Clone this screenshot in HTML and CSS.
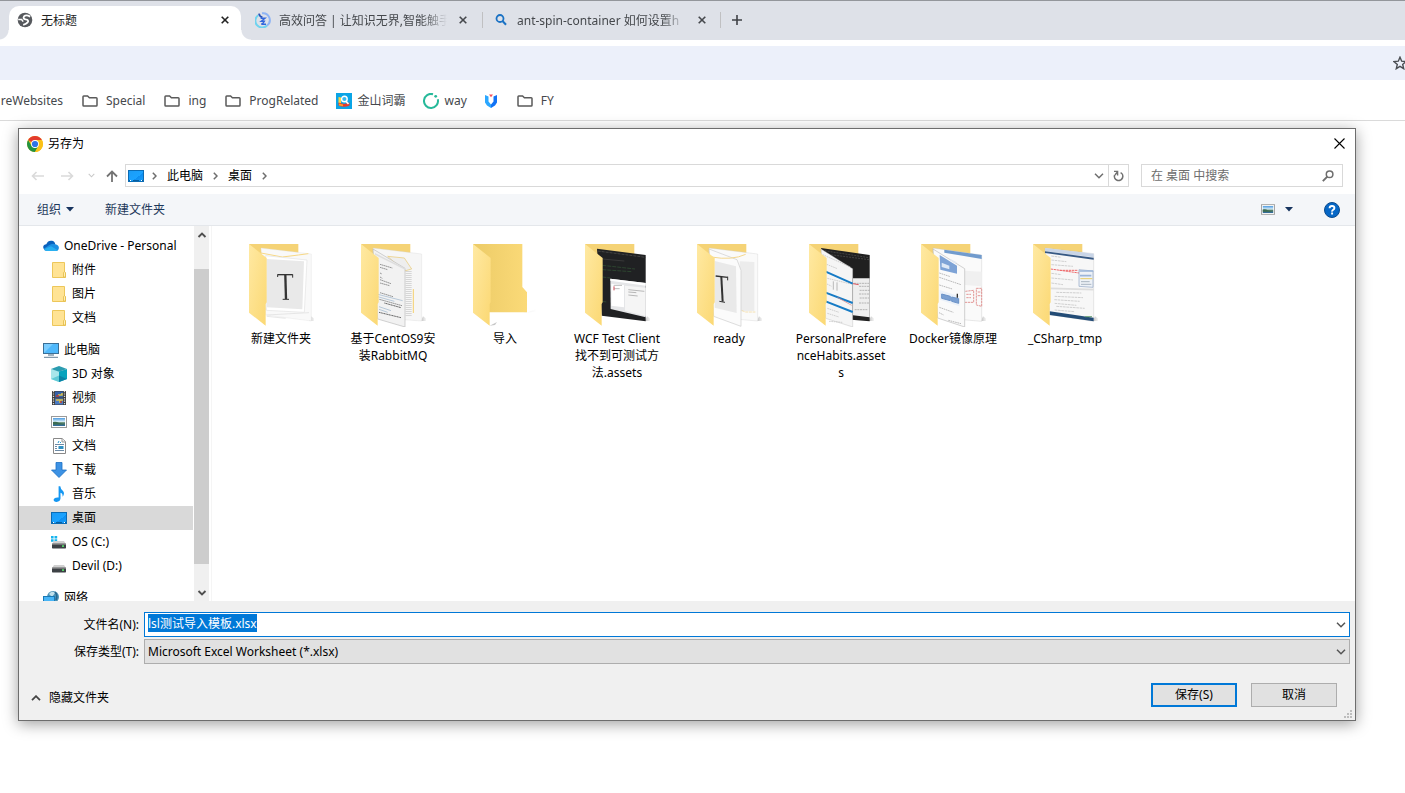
FILE: index.html
```html
<!DOCTYPE html>
<html lang="zh-CN">
<head>
<meta charset="utf-8">
<title>无标题</title>
<link rel="stylesheet" href="styles.css">
</head>
<body>
<svg class="defs" aria-hidden="true">
  <defs>
    <linearGradient id="gFront" x1="0" y1="0" x2="1" y2="1"><stop offset="0" stop-color="#ffe9a2"/><stop offset="1" stop-color="#fbd873"/></linearGradient>
    <linearGradient id="gBack" x1="0" y1="0" x2="1" y2="0"><stop offset="0" stop-color="#eccb67"/><stop offset="1" stop-color="#fbda78"/></linearGradient>
    <linearGradient id="gBlue" x1="0" y1="0" x2="1" y2="1"><stop offset="0" stop-color="#1b9bf5"/><stop offset=".6" stop-color="#1ba3ff"/><stop offset=".6" stop-color="#0d8df0"/><stop offset="1" stop-color="#1aa0fa"/></linearGradient>
    <linearGradient id="gSky" x1="0" y1="0" x2="0" y2="1"><stop offset="0" stop-color="#4d9be0"/><stop offset=".45" stop-color="#d7ecf8"/><stop offset=".6" stop-color="#557f5e"/><stop offset="1" stop-color="#2d6aa6"/></linearGradient>
    <linearGradient id="gShade" x1="0" y1="0" x2="1" y2="0"><stop offset="0" stop-color="#999" stop-opacity=".6"/><stop offset="1" stop-color="#999" stop-opacity="0"/></linearGradient>
    <symbol id="folderOutline" viewBox="0 0 16 12"><path d="M1 1.8Q1 1 1.8 1H5.6L7.4 2.7H14.2Q15 2.7 15 3.5V10.2Q15 11 14.2 11H1.8Q1 11 1 10.2Z" fill="none" stroke="#5a5a5a" stroke-width="1.5"/></symbol>
    <symbol id="closeX" viewBox="0 0 8 8"><path d="M.7.7 7.3 7.3M7.3.7.7 7.3" stroke="currentColor" stroke-width="1.6"/></symbol>
    <symbol id="chevDown" viewBox="0 0 10 6"><path d="M1 .8 5 4.8 9 .8" fill="none" stroke="currentColor" stroke-width="1.5"/></symbol>
    <symbol id="chevRight" viewBox="0 0 5 8"><path d="M.8.8 4 4 .8 7.2" fill="none" stroke="#6e6e6e" stroke-width="1.5"/></symbol>
    <symbol id="smallFolder" viewBox="0 0 14 16"><path d="M.5.5H12.5V10L13.5 11V15.5H.5Z" fill="#ffe394" stroke="#edc75a"/><path d="M11.5 15V10.5L12.5 9.5L13.5 11V15Z" fill="#fff0b8" stroke="#e3ba45" stroke-width=".8"/></symbol>
    <symbol id="desktop" viewBox="0 0 16 12"><rect x=".5" y=".5" width="15" height="11" fill="url(#gBlue)" stroke="#0b6cb5"/><path d="M1 10.5H3M5 10.5H11M13 10.5H15" stroke="#075e9f"/><path d="M2 10.5H3M13 10.5H14" stroke="#fff"/></symbol>
    <symbol id="picture" viewBox="0 0 16 12"><rect x=".5" y=".5" width="15" height="11" fill="#fff" stroke="#9a9a9a"/><rect x="2" y="2" width="12" height="8" fill="url(#gSky)"/><path d="M2 6Q5 5 8 7L14 8.5H2Z" fill="#3b6b52"/></symbol>
    <symbol id="drive" viewBox="0 0 14 9"><path d="M2 1H12L14 4H0Z" fill="#d0d0d0"/><rect y="3.5" width="14" height="5" rx=".7" fill="#3d4145"/><path d="M0 4H14" stroke="#a8a8a8"/><rect x="10" y="5.3" width="2" height="1.6" fill="#57e36b"/></symbol>
    <symbol id="fBack" viewBox="-3 0 198 252"><path d="M160 210 188 198Q194 207 180 207L150 209ZM50 248 72 237 66 246Z" fill="url(#gShade)"/><path d="M0 3H148V132L162 148V208H45Z" fill="url(#gBack)"/></symbol>
    <symbol id="fBackOpen" viewBox="-3 0 198 252"><path d="M180 234 186 220Q205 232 194 234Z" fill="url(#gShade)"/><path d="M0 3H148V200H45Z" fill="#f5d376"/></symbol>
    <symbol id="fFront" viewBox="-3 0 198 252"><path d="M0 3 53 45V178L50 183V248L0 209Z" fill="url(#gFront)"/></symbol>
  </defs>
</svg>

<header class="browser">
  <div class="tabstrip">
    <div class="tab active">
      <svg class="fav" viewBox="0 0 16 16"><circle cx="8" cy="8" r="7.3" fill="#56595d"/><path d="M13.2 4.6Q9 2.4 7 4.4 5.6 6.6 8.6 7.4 12.4 8.2 10.6 10.4 9.4 12 6.2 12.8" fill="none" stroke="#fff" stroke-width="1.8"/><path d="M1.2 7.6H4.6L6.2 9.6" fill="none" stroke="#fff" stroke-width="1.5"/></svg>
      <span class="tab-title">无标题</span>
      <button class="tab-close" aria-label="关闭"><svg width="8" height="8"><use href="#closeX"/></svg></button>
    </div>
    <div class="tab">
      <svg class="fav" viewBox="0 0 16 16"><path d="M3.2 3.2A6.8 6.8 0 1 0 12 13.5" fill="none" stroke="#6fd3ef" stroke-width="2"/><path d="M7 1.3A6.8 6.8 0 0 1 12 13.5" fill="none" stroke="#8fb4f4" stroke-width="2"/><path d="M4 1.6Q4.4 4.4 7.4 5.4" fill="none" stroke="#2751b8" stroke-width="1.8"/><path d="M5.6 6.2H10L6.2 9.2H9.4Q8.6 11 6.4 12.2H11" fill="none" stroke="#3267dc" stroke-width="1.4"/></svg>
      <span class="tab-title fade">高效问答 | 让知识无界,智能触手</span>
      <button class="tab-close" aria-label="关闭"><svg width="8" height="8"><use href="#closeX"/></svg></button>
    </div>
    <div class="tab ruled">
      <svg class="fav" viewBox="0 0 16 16"><circle cx="7" cy="6.5" r="3.5" fill="none" stroke="#1b72c4" stroke-width="1.8"/><path d="M9.5 9 13 12.7" stroke="#1b72c4" stroke-width="2"/></svg>
      <span class="tab-title fade">ant-spin-container 如何设置h</span>
      <button class="tab-close" aria-label="关闭"><svg width="8" height="8"><use href="#closeX"/></svg></button>
    </div>
    <button class="new-tab" aria-label="新标签页"><svg width="10" height="10" viewBox="0 0 10 10"><path d="M5 0V10M0 5H10" stroke="#3f4246" stroke-width="1.6"/></svg></button>
  </div>
  <div class="omnibox">
    <button class="star" aria-label="收藏"><svg width="14" height="14" viewBox="0 0 14 14"><path d="M7 1.2 8.7 5.2 13 5.6 9.7 8.4 10.7 12.7 7 10.4 3.3 12.7 4.3 8.4 1 5.6 5.3 5.2Z" fill="none" stroke="#4a4d52" stroke-width="1.4"/></svg></button>
  </div>
  <nav class="bookmarks" aria-label="书签">
    <a href="#" class="first">reWebsites</a>
    <a href="#"><svg width="16" height="12"><use href="#folderOutline"/></svg>Special</a>
    <a href="#"><svg width="16" height="12"><use href="#folderOutline"/></svg>ing</a>
    <a href="#"><svg width="16" height="12"><use href="#folderOutline"/></svg>ProgRelated</a>
    <a href="#" class="site"><svg width="16" height="16" viewBox="0 0 16 16"><rect width="16" height="16" fill="#0ba5e6"/><path d="M2.5 4 5 4.5 5 10 2.5 10Z" fill="#ffd33c"/><path d="M2.5 9.5 8 11 13.5 9.5V12.5Q8 15 2.5 12.5Z" fill="#e8392b"/><path d="M3 10.5 7 11.5V13.3L3 12.5Z" fill="#ff9d25"/><circle cx="8.4" cy="6" r="2.8" fill="#35b9f2" stroke="#fff" stroke-width="1.4"/><path d="M10 8.4 12.5 11" stroke="#fff" stroke-width="1.6"/></svg>金山词霸</a>
    <a href="#" class="site"><svg width="16" height="16" viewBox="0 0 16 16"><path d="M10 1.2A7 7 0 1 0 14.8 6.3" fill="none" stroke="#26b99a" stroke-width="2"/><circle cx="12.7" cy="3.3" r="1.4" fill="#26b99a"/></svg>way</a>
    <a href="#" class="site" aria-label="书签"><svg width="14" height="16" viewBox="0 0 14 16"><path d="M1 2 4.5 3.5V8.5L7 11.5V15L3 12.5 1 9.5Z" fill="#2ba7ff"/><path d="M13 2 9.5 3.5V8.5L7 11.5V15L11 12.5 13 9.5Z" fill="#1173f5"/><path d="M5 1.5H9L7 4.3Z" fill="#f4515d"/></svg></a>
    <a href="#"><svg width="16" height="12"><use href="#folderOutline"/></svg>FY</a>
  </nav>
</header>

<section class="dialog" role="dialog" aria-label="另存为">
  <div class="titlebar">
    <svg width="16" height="16" viewBox="0 0 16 16"><circle cx="8" cy="8" r="8" fill="#fbc116"/><path d="M8 8 1.1 4A8 8 0 0 1 14.9 4H8Z" fill="#e33b2e"/><path d="M1.1 4 4.6 10 8 12 8 16A8 8 0 0 1 1.1 4Z" fill="#229342"/><path d="M4.6 10 11.4 10 8 16Z" fill="#229342"/><path d="M8 16 11.5 10V8L14.9 4A8 8 0 0 1 8 16Z" fill="#fbc116"/><circle cx="8" cy="8" r="3.9" fill="#fff"/><circle cx="8" cy="8" r="3.1" fill="#2f74e6"/></svg>
    <span>另存为</span>
    <button class="dialog-close" aria-label="关闭"><svg width="11" height="11" viewBox="0 0 11 11"><path d="M.5.5 10.5 10.5M10.5.5.5 10.5" stroke="#000" stroke-width="1.1"/></svg></button>
  </div>

  <div class="navrow">
    <div class="nav-buttons">
      <button aria-label="后退" disabled><svg width="13" height="10" viewBox="0 0 13 10"><path d="M13 5H1.5M5.5 1 1.5 5 5.5 9" fill="none" stroke="#dadada" stroke-width="1.6"/></svg></button>
      <button aria-label="前进" disabled><svg width="13" height="10" viewBox="0 0 13 10"><path d="M0 5H11.5M7.5 1 11.5 5 7.5 9" fill="none" stroke="#dadada" stroke-width="1.6"/></svg></button>
      <button class="recent" aria-label="最近位置" disabled><svg width="7" height="5"><use href="#chevDown"/></svg></button>
      <button class="up" aria-label="向上"><svg width="12" height="12" viewBox="0 0 12 12"><path d="M6 12V1.5M1 6.5 6 1.5 11 6.5" fill="none" stroke="#737373" stroke-width="1.8"/></svg></button>
    </div>
    <div class="address">
      <svg width="16" height="12"><use href="#desktop"/></svg>
      <svg class="sep" width="5" height="8"><use href="#chevRight"/></svg>
      <button>此电脑</button>
      <svg class="sep" width="5" height="8"><use href="#chevRight"/></svg>
      <button>桌面</button>
      <svg class="sep" width="5" height="8"><use href="#chevRight"/></svg>
      <button class="drop" aria-label="展开"><svg width="10" height="6"><use href="#chevDown"/></svg></button>
      <button class="refresh" aria-label="刷新"><svg width="11" height="12" viewBox="0 0 11 12"><path d="M7.6 2.6A4.2 4.2 0 1 1 1.6 5" fill="none" stroke="#707070" stroke-width="1.6"/><path d="M1 1.4H4.6V5.4M4.6 1.6 2 5" fill="none" stroke="#707070" stroke-width="1.4"/></svg></button>
    </div>
    <label class="search">
      <input type="search" aria-label="在 桌面 中搜索" placeholder="在 桌面 中搜索">
      <svg width="12" height="12" viewBox="0 0 12 12"><circle cx="7.6" cy="4.3" r="3.3" fill="none" stroke="#6e6e6e" stroke-width="1.5"/><path d="M5.3 6.7.8 11.2" stroke="#6e6e6e" stroke-width="1.9"/></svg>
    </label>
  </div>

  <div class="toolbar">
    <button>组织 <svg width="8" height="5" viewBox="0 0 8 5"><path d="M0 0H8L4 4.6Z" fill="#17345f"/></svg></button>
    <button>新建文件夹</button>
    <button class="view" aria-label="更改视图"><svg width="14" height="11"><use href="#picture" width="14" height="11"/></svg><svg width="8" height="5" viewBox="0 0 8 5"><path d="M0 0H8L4 4.6Z" fill="#17345f"/></svg></button>
    <button class="help" aria-label="帮助"><svg width="16" height="16" viewBox="0 0 16 16"><circle cx="8" cy="8" r="7.5" fill="#0667c6" stroke="#0a4a8d"/><path d="M5.6 6.2Q5.6 4 8 4T10.4 6Q10.4 7 9.2 7.8T8.1 9.6M8.1 10.6V12.6" fill="none" stroke="#fff" stroke-width="1.9"/></svg></button>
  </div>

  <div class="content">
    <nav class="tree" aria-label="文件夹">
      <a href="#" class="root"><svg width="16" height="16" viewBox="0 0 16 16"><path d="M3.5 12Q0 11.7.2 8.8.6 6.2 3.3 6.2 5 2.2 8.8 2.8 11.6 3.2 12.3 6.3L6 12Z" fill="#0a62bd"/><path d="M6 7.3Q9 5 12.3 6.2 15.8 6.8 15.9 9.7 15.8 12.8 13 13H4Q1.2 13 .8 10.7Z" fill="#1d90e2"/><path d="M1 11.2 8 8.2 14.8 12.2Q14 13 13 13H4Q2 13 1 11.2Z" fill="#29b0f0"/></svg>OneDrive - Personal</a>
      <a href="#"><svg width="16" height="16"><use href="#smallFolder"/></svg>附件</a>
      <a href="#"><svg width="16" height="16"><use href="#smallFolder"/></svg>图片</a>
      <a href="#"><svg width="16" height="16"><use href="#smallFolder"/></svg>文档</a>
      <a href="#" class="root"><svg width="16" height="16" viewBox="0 0 16 16"><rect x=".5" y="1.5" width="15" height="10" fill="#4fb8fb" stroke="#3a6f96"/><path d="M1 11 10 2H1Z" fill="#7bcdff"/><path d="M5 13H11M1 15.3H15" stroke="#8299ab" stroke-width="1.3"/></svg>此电脑</a>
      <a href="#"><svg width="16" height="16" viewBox="0 0 16 16"><path d="M0 3 8 5.5V16L0 13Z" fill="#a9e6ea"/><path d="M16 3 8 5.5V16L16 13Z" fill="#07a3bd"/><path d="M0 3 8 0 16 3 8 5.7Z" fill="#2b9cb0"/><path d="M0 13 8 9.5V16Z" fill="#62cbd6"/><path d="M16 13 8 9.5V16Z" fill="#0b83a5"/></svg>3D 对象</a>
      <a href="#"><svg width="16" height="16" viewBox="0 0 16 16"><rect x="1" y="1" width="14" height="14" fill="#3c3c3c"/><path d="M2.5 1V15M13.5 1V15" stroke="#ddd" stroke-width="1.3" stroke-dasharray="1.2 1.2"/><rect x="4" y="1.5" width="8" height="6" fill="#3461a9"/><rect x="4" y="8.5" width="8" height="6" fill="#4a7bc4"/><path d="M7 5H11V3M5 10H9V13M9 10H12" stroke="#dcc14a" stroke-width="1.5" fill="none"/><path d="M5 6H8M9 12H11" stroke="#b93d36" stroke-width="1.5"/></svg>视频</a>
      <a href="#"><svg width="16" height="12"><use href="#picture"/></svg>图片</a>
      <a href="#"><svg width="16" height="16" viewBox="0 0 16 16"><path d="M2.5.5H11L14.5 3.5V15.5H2.5Z" fill="#fff" stroke="#888"/><path d="M11 .5V4H14.5" fill="#eee" stroke="#999"/><path d="M4 6.5H13M4 8.5H6M4 10.5H6M4 12.5H13" stroke="#6d8aa5"/><path d="M7 5 8 3M9 5 10 4" stroke="#2898cf"/><rect x="7.5" y="8" width="5" height="3" fill="#2f8fc1"/></svg>文档</a>
      <a href="#"><svg width="16" height="16" viewBox="0 0 16 16"><path d="M5 .5H11V8H15.5L8 15.5.5 8H5Z" fill="#3d92e4" stroke="#1a6fc4" stroke-width=".8"/></svg>下载</a>
      <a href="#"><svg width="16" height="16" viewBox="0 0 16 16"><path d="M7.6.3H9.3Q9.5 3 11.8 4.7 14.3 7.3 11.5 10.8 12 7.4 9.5 6.7V12.6Q9 15.8 5.6 16 2.5 15.8 2.6 13.6 3.4 11 7.6 11.5Z" fill="#1597f2"/></svg>音乐</a>
      <a href="#" class="selected" aria-current="true"><svg width="16" height="12"><use href="#desktop"/></svg>桌面</a>
      <a href="#"><svg width="16" height="16" viewBox="0 0 16 16"><path d="M0 2H2.6V4.4H0ZM3.5 2H6.2V4.4H3.5ZM0 5.3H2.6V7.8H0ZM3.5 5.3H6.2V7.8H3.5Z" fill="#16b4ee"/><use href="#drive" x="1" y="6" width="14" height="9"/></svg>OS (C:)</a>
      <a href="#"><svg width="16" height="16" viewBox="0 0 16 16"><use href="#drive" x="1" y="6" width="14" height="9"/></svg>Devil (D:)</a>
      <a href="#" class="root"><svg width="16" height="16" viewBox="0 0 16 16"><circle cx="10" cy="7" r="6" fill="#4c94b7"/><path d="M6 4Q9 0 12 3L9 7Z" fill="#c3e1ec"/><path d="M12 2Q15 5 13 10" stroke="#28668f" stroke-width="1.6" fill="none"/><rect x=".5" y="6.5" width="11" height="7" fill="#48b5f6" stroke="#1979b5"/></svg>网络</a>
    </nav>
    <div class="scrollbar" aria-hidden="true">
      <svg width="10" height="6" viewBox="0 0 10 6"><path d="M1.5 5 5 1.5 8.5 5" fill="none" stroke="#505050" stroke-width="1.9"/></svg>
      <div class="thumb"></div>
      <svg width="10" height="6" viewBox="0 0 10 6"><path d="M1.5 1 5 4.5 8.5 1" fill="none" stroke="#505050" stroke-width="1.9"/></svg>
    </div>
    <ul class="files">
      <li><svg class="big" viewBox="-3 0 198 252"><use href="#fBackOpen" x="-3" width="198" height="252"/>
        <path d="M36 15 187 33V234L50 216Z" fill="#f9f9f9" stroke="#ddd"/><path d="M53 216 180 209M53 220 110 226" stroke="#ddd" stroke-width="2"/><path d="M36 30 100 42 148 36 178 32" fill="none" stroke="#f7d885" stroke-width="3"/><path d="M50 38 174 51 166 208 52 202Z" fill="#fff" stroke="#e3e3e3" stroke-width="2"/><path d="M52 48 165 55 160 199 53 193Z" fill="#e9e9e9"/><path d="M86 95H131" stroke="#333" stroke-width="4"/><path d="M109 96 111 168" stroke="#333" stroke-width="7"/><path d="M101 169H120M86 94V102M131 94V104" stroke="#333" stroke-width="3"/><use href="#fFront" x="-3" width="198" height="252"/></svg><a href="#">新建文件夹</a></li>
      <li><svg class="big" viewBox="-3 0 198 252"><use href="#fBackOpen" x="-3" width="198" height="252"/>
        <path d="M36 15 182 33V234L100 228Z" fill="#f6f6f6" stroke="#d5d5d5"/><path d="M143 84V219" stroke="#999" stroke-width="18" stroke-dasharray="2 4" opacity=".45"/><path d="M157 138V210" stroke="#f5d16f" stroke-width="3"/><path d="M80 40 130 45 152 78 130 84Z" fill="#eee" stroke="#e9c76c" stroke-width="2"/><path d="M36 18 132 76V252L50 228Z" fill="#f2f2f2" stroke="#bbb" stroke-width="2"/><path d="M42 30 132 76V80L42 35Z" fill="#ddd"/><path d="M57 64 94 75M57 73 80 80M57 90 63 93M57 102 64 106M57 110 90 122M57 120 86 128M57 149 96 161M55 169 123 188" stroke="#666" stroke-width="2" stroke-dasharray="5 1"/><path d="M50 154 125 173M50 161 100 175M54 191 90 203M54 199 80 208" stroke="#98b2ca" stroke-width="2"/><path d="M54 208 120 224M70 180 120 194" stroke="#666" stroke-width="3" stroke-dasharray="4 1"/><use href="#fFront" x="-3" width="198" height="252"/></svg><a href="#">基于CentOS9安装RabbitMQ</a></li>
      <li><svg class="big" viewBox="-3 0 198 252"><use href="#fBack" x="-3" width="198" height="252"/><use href="#fFront" x="-3" width="198" height="252"/></svg><a href="#">导入</a></li>
      <li><svg class="big" viewBox="-3 0 198 252"><use href="#fBackOpen" x="-3" width="198" height="252"/>
        <path d="M36 17 182 36V235L50 218Z" fill="#202123"/><path d="M38 24 182 43" stroke="#444" stroke-width="3" stroke-dasharray="9 3"/><path d="M52 67 150 78M52 80 140 86M52 102 76 105M52 175 65 177" stroke="#2f4a31" stroke-width="2.5" stroke-dasharray="12 3"/><path d="M52 48 118 54" stroke="#444" stroke-width="2"/><path d="M76 107 182 120V223L77 198Z" fill="#e5e6e8"/><path d="M76 107 182 120V128L76 113Z" fill="#fff"/><path d="M79 122 117 126V193L79 188Z" fill="#fff"/><path d="M120 128 182 134V219L120 203Z" fill="#f5f5f5"/><path d="M86 127H111M88 137H104M130 140 178 145M130 147 154 149M130 156 158 159" stroke="#999" stroke-width="2"/><path d="M87 130V142" stroke="#cf4652" stroke-width="3"/><use href="#fFront" x="-3" width="198" height="252"/></svg><a href="#">WCF Test Client找不到可测试方法.assets</a></li>
      <li><svg class="big" viewBox="-3 0 198 252"><use href="#fBackOpen" x="-3" width="198" height="252"/>
        <path d="M36 15 182 33V234L90 226Z" fill="#fafafa" stroke="#ccc"/><path d="M128 55 172 57V204L128 205Z" fill="#ececec"/><path d="M110 46Q126 78 124 198L145 207H175" fill="none" stroke="#f4d78e" stroke-width="2" stroke-dasharray="9 2"/><path d="M36 18 120 50 132 82V250L50 220Z" fill="#fbfbfb" stroke="#ccc" stroke-width="2"/><path d="M53 54 117 70 119 210 53 194Z" fill="#e9e9e9"/><path d="M43 42Q105 53 146 34" fill="none" stroke="#f4d78e" stroke-width="3"/><path d="M56 99 92 103" stroke="#333" stroke-width="4"/><path d="M73 102 77 176" stroke="#333" stroke-width="6"/><path d="M67 175 84 178M92 101V112" stroke="#333" stroke-width="3"/><use href="#fFront" x="-3" width="198" height="252"/></svg><a href="#">ready</a></li>
      <li><svg class="big" viewBox="-3 0 198 252"><use href="#fBackOpen" x="-3" width="198" height="252"/>
        <path d="M36 15 182 36V235L90 227Z" fill="#202020"/><path d="M38 22 180 44M40 32 180 50" stroke="#555" stroke-width="2" stroke-dasharray="6 3"/><path d="M132 106H182V223L132 217Z" fill="#eee"/><path d="M135 121H180M150 130H180M152 142H182M150 153H180M152 165H180M150 180H180M137 200H175" stroke="#999" stroke-width="2" stroke-dasharray="6 2"/><path d="M132 122 149 125" stroke="#de5961" stroke-width="3"/><path d="M36 18 131 77V252L50 226Z" fill="#f5f5f5" stroke="#aaa"/><path d="M50 86 131 122M50 149 131 180M50 175 131 207" stroke="#167bc5" stroke-width="6"/><path d="M41 35 125 72M53 64 85 77M55 106 122 122M54 123 68 130M55 196 90 208M55 211 90 222M60 235 100 238" stroke="#bbb" stroke-width="2" stroke-dasharray="5 2"/><path d="M73 115V140M84 118V143" stroke="#999" stroke-width="2"/><path d="M85 163 128 187" stroke="#dc817d" stroke-width="2"/><use href="#fFront" x="-3" width="198" height="252"/></svg><a href="#">PersonalPreferenceHabits.assets</a></li>
      <li><svg class="big" viewBox="-3 0 198 252"><use href="#fBackOpen" x="-3" width="198" height="252"/>
        <path d="M36 15 182 36V235L90 227Z" fill="#fafafa" stroke="#bbb"/><path d="M70 20 182 36V48L70 29Z" fill="#719bcd"/><path d="M132 83 182 86V130L132 126Z" fill="#f0f0f0"/><path d="M133 145 158 142V178H132M166 136H182V190L166 186ZM136 154H150M136 164H150M170 147H182M170 158H182" fill="none" stroke="#e29796" stroke-width="3" stroke-dasharray="7 2"/><path d="M36 18 131 77V252L50 225Z" fill="#fafafa" stroke="#bbb" stroke-width="2"/><path d="M56 36 108 68V92L58 80Z" fill="#7ea3d6"/><path d="M62 59 85 68V79L62 72Z" fill="#dfe9f6"/><path d="M88 50 106 60" stroke="#e0e7f2" stroke-width="5"/><path d="M55 90 88 101M55 103 120 125M55 126 94 138M55 193 97 208M54 209 68 216M82 232 120 242" stroke="#999" stroke-width="2" stroke-dasharray="5 2"/><path d="M56 141 115 160V190L56 170Z" fill="#ebf1f9"/><path d="M62 153 88 160V173L62 166ZM92 162 113 167V181L92 175Z" fill="#7ba0d2" stroke="#6a92c8" stroke-width="3"/><path d="M109 152V164" stroke="#333" stroke-width="4"/><use href="#fFront" x="-3" width="198" height="252"/></svg><a href="#">Docker镜像原理</a></li>
      <li><svg class="big" viewBox="-3 0 198 252"><use href="#fBackOpen" x="-3" width="198" height="252"/>
        <path d="M36 15 182 32V235L50 215Z" fill="#f7f7f7" stroke="#bbb"/><path d="M36 15 182 32V43L36 25Z" fill="#c9d5e7"/><path d="M36 25 182 44V50L36 30Z" fill="#375984"/><path d="M55 39 85 43M55 51 100 56M55 65 120 70M55 91 85 95M55 105 120 111M55 120 90 125M70 148 145 150M65 160 150 164M64 170 140 175M65 181 130 187M70 190 155 196M65 201 125 206" stroke="#bbb" stroke-width="2" stroke-dasharray="8 2"/><path d="M53 78 138 90M80 82H135" stroke="#ee6a6c" stroke-width="3" stroke-dasharray="7 2"/><path d="M138 80 180 84V133L138 130Z" fill="#eef2f7" stroke="#8fa5c4" stroke-width="2"/><path d="M139 84H181M141 98H175" stroke="#9bb5d9" stroke-width="5"/><path d="M142 107H178" stroke="#e6cc67" stroke-width="3"/><path d="M144 116H170M144 124H175" stroke="#8997a7" stroke-width="2"/><path d="M53 136 182 140" stroke="#ddd" stroke-width="5"/><path d="M50 205 182 224V235L50 216Z" fill="#234c76"/><path d="M156 221H177" stroke="#69a275" stroke-width="3"/><use href="#fFront" x="-3" width="198" height="252"/></svg><a href="#">_CSharp_tmp</a></li>
    </ul>
  </div>

  <form class="footer">
    <div class="fields">
      <label for="fname">文件名(N):</label>
      <div class="combo"><input id="fname" type="text" value="lsl测试导入模板.xlsx" autocomplete="off" spellcheck="false"><svg width="10" height="6"><use href="#chevDown"/></svg></div>
      <label for="ftype">保存类型(T):</label>
      <div class="combo"><select id="ftype"><option>Microsoft Excel Worksheet (*.xlsx)</option></select><svg width="10" height="6"><use href="#chevDown"/></svg></div>
    </div>
    <div class="actions">
      <button type="button" class="toggle"><svg width="10" height="6" viewBox="0 0 10 6"><path d="M1 5.2 5 1.2 9 5.2" fill="none" stroke="#444" stroke-width="1.8"/></svg>隐藏文件夹</button>
      <button type="button" class="btn primary">保存(S)</button>
      <button type="button" class="btn">取消</button>
    </div>
    <svg class="grip" width="8" height="8" viewBox="0 0 8 8"><path d="M6 0H8V2H6ZM6 3H8V5H6ZM6 6H8V8H6ZM3 3H5V5H3ZM3 6H5V8H3ZM0 6H2V8H0Z" fill="#bdbdbd"/></svg>
  </form>
</section>
<script src="app.js"></script>
</body>
</html>
```
FILE: app.js
```js
const nameField = document.getElementById('fname');
nameField.focus();
nameField.select();
```
FILE: styles.css
```css
* { box-sizing: border-box; }
html, body { height: 100%; }
body {
  margin: 0;
  background: #fff;
  color: #000;
  font: 12px/16px "Noto Sans", "Noto Sans CJK SC", sans-serif;
  overflow: hidden;
  position: relative;
}
button, input, select { font: inherit; color: inherit; }
button { background: none; border: 0; padding: 0; margin: 0; }
a { color: inherit; text-decoration: none; }
svg { display: block; flex: none; }
.defs { position: absolute; width: 0; height: 0; }

/* browser chrome */
.browser { border-bottom: 1px solid #dadada; }
.tabstrip {
  display: flex;
  height: 40px;
  padding: 5px 0 0 9px;
  background: #dee1e8;
  border-top: 1px solid #93969b;
}
.tab {
  display: flex;
  align-items: center;
  width: 240px;
  padding: 0 15px 6px 13px;
  color: #45484c;
}
.tab.active {
  position: relative;
  width: 232px;
  padding: 0 12px 6px 8px;
  margin-right: 1px;
  background: #fff;
  border-radius: 10px 10px 0 0;
  color: #222;
}
.tab.active::before, .tab.active::after {
  content: "";
  position: absolute;
  bottom: 0;
  width: 10px;
  height: 10px;
}
.tab.active::before { right: 100%; background: radial-gradient(circle at 0 0, transparent 9px, #fff 10px); }
.tab.active::after { left: 100%; background: radial-gradient(circle at 100% 0, transparent 9px, #fff 10px); }
.tab.ruled {
  width: 239px;
  padding-left: 11px;
  background: linear-gradient(#c0c0c2, #c0c0c2) 0 6px / 1px 16px no-repeat, linear-gradient(#c0c0c2, #c0c0c2) 100% 6px / 1px 16px no-repeat;
}
.fav { width: 16px; height: 16px; margin-right: 8px; }
.tab-title { flex: 1; min-width: 0; padding-top: 1px; white-space: nowrap; overflow: hidden; }
.tab-title.fade { mask-image: linear-gradient(90deg, #000 calc(100% - 24px), transparent); }
.tab-close { width: 8px; height: 8px; margin-left: 12px; }
.new-tab { width: 32px; display: flex; justify-content: center; align-items: center; padding-bottom: 6px; }
.omnibox {
  display: flex;
  justify-content: flex-end;
  align-items: center;
  height: 34px;
  margin-top: 6px;
  background: #ecf0fa;
  overflow: hidden;
}
.star { margin-right: -2px; }
.bookmarks {
  display: flex;
  align-items: center;
  gap: 19px;
  height: 40px;
  padding-top: 1px;
  color: #45484c;
}
.bookmarks a { display: flex; align-items: center; gap: 8px; white-space: nowrap; }
.bookmarks .first { width: 63px; justify-content: flex-end; }
.bookmarks .site { gap: 6px; margin-left: -2px; }

/* save dialog */
.dialog {
  position: absolute;
  top: 128px;
  left: 18px;
  right: 49px;
  background: #fff;
  border: 1px solid #6d6d6d;
  box-shadow: 0 3px 14px rgba(0, 0, 0, .38);
}
.titlebar { display: flex; align-items: center; gap: 5px; height: 29px; padding: 0 10px 0 8px; }
.dialog-close { margin-left: auto; }
.navrow { display: flex; padding: 6px 12px 7px; }
.nav-buttons { display: flex; align-items: center; gap: 17px; width: 94px; }
.nav-buttons .recent { color: #c8c8c8; margin-left: -3px; }
.nav-buttons .up { margin-left: -6px; }
.address {
  display: flex;
  align-items: center;
  flex: 1;
  height: 23px;
  padding-left: 2px;
  border: 1px solid #d9d9d9;
}
.address .sep { margin: 0 10px; }
.address svg:first-child + .sep { margin-left: 8px; }
.address .drop { margin-left: auto; padding: 0 4px; color: #6e6e6e; }
.address .refresh { height: 100%; padding: 0 4px; border-left: 1px solid #d9d9d9; }
.search {
  display: flex;
  align-items: center;
  width: 202px;
  height: 23px;
  margin-left: 12px;
  padding: 0 8px 0 9px;
  border: 1px solid #d9d9d9;
}
.search input { flex: 1; min-width: 0; padding: 0; border: 0; outline: 0; background: none; }
.search input::placeholder { color: #6d6d6d; opacity: 1; }
.toolbar {
  display: flex;
  align-items: center;
  gap: 31px;
  height: 32px;
  padding: 0 15px 0 18px;
  background: #f4f6f9;
  border-bottom: 1px solid #e4e7eb;
  color: #1e395b;
}
.toolbar button { display: flex; align-items: center; gap: 5px; }
.toolbar .view { margin-left: auto; gap: 10px; }

.content { display: flex; height: 375px; overflow: hidden; }
.tree { width: 175px; padding-top: 8px; overflow: hidden; }
.tree a {
  display: flex;
  align-items: center;
  gap: 5px;
  height: 24px;
  padding-left: 32px;
  white-space: nowrap;
}
.tree .root { padding-left: 24px; margin-top: 8px; }
.tree .root:first-child { margin-top: 0; }
.tree .selected { background: #d9d9d9; margin-right: 1px; }
.scrollbar {
  display: flex;
  flex-direction: column;
  align-items: center;
  width: 15px;
  padding: 6px 0 5px;
  background: #f0f0f0;
}
.thumb { width: 100%; height: 295px; margin: 31px 0 auto; background: #cdcdcd; }
.files {
  display: flex;
  flex-wrap: wrap;
  align-content: flex-start;
  gap: 20px;
  flex: 1;
  margin: 0 0 0 2px;
  padding: 17px 0 0 23px;
  list-style: none;
  border-left: 1px solid #f5f5f5;
}
.files li { display: flex; flex-direction: column; align-items: center; gap: 3px; width: 92px; }
.files a { width: 100%; line-height: 17px; text-align: center; overflow-wrap: anywhere; }
.big { width: 66px; height: 84px; }

.footer { position: relative; background: #f0f0f0; padding: 11px 5px 13px; }
.fields {
  display: grid;
  grid-template-columns: 115px 1fr;
  gap: 2px 5px;
  align-items: center;
}
.fields label { text-align: right; }
.combo { position: relative; }
.combo input, .combo select { display: block; width: 100%; height: 25px; padding: 0 24px 0 3px; border-radius: 0; outline: 0; }
.combo input { border: 1px solid #0078d7; background: #fff; padding-bottom: 3px; }
.combo input::selection { background: #0078d7; color: #fff; }
.combo select { appearance: none; border: 1px solid #adadad; background: #e1e1e1; }
.combo svg { position: absolute; right: 4px; top: 10px; color: #555; pointer-events: none; }
.actions { display: flex; align-items: center; gap: 14px; margin: 19px 13px 0 7px; }
.toggle { display: flex; align-items: center; gap: 8px; margin-right: auto; padding-top: 6px; }
.btn { width: 86px; height: 24px; border: 1px solid #adadad; background: #e1e1e1; }
.btn.primary { border: 2px solid #0078d7; }
.grip { position: absolute; right: 3px; bottom: 2px; }
```
